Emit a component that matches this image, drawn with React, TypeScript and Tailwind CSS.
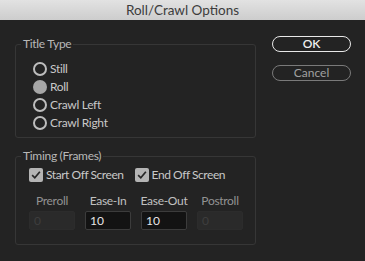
import React, { useState } from 'react';

const font = { fontFamily: 'Lato, "Open Sans", sans-serif' };

const Radio = ({ label, checked, onClick }: { label: string; checked: boolean; onClick: () => void }) => (
  <button onClick={onClick} className="flex h-[18px] items-center gap-[3px] text-[12px] tracking-[-0.3px] text-[#c8c8c8]">
    {checked ? (
      <span className="h-[14px] w-[14px] rounded-full bg-[#a6a6a6]" />
    ) : (
      <span className="h-[14px] w-[14px] rounded-full border-2 border-[#bdbdbd]" />
    )}
    <span>{label}</span>
  </button>
);

const Check = ({ label }: { label: string }) => (
  <label className="flex items-center gap-[3px] text-[12px] tracking-[-0.45px] text-[#c8c8c8]">
    <span className="flex h-[14px] w-[14px] items-center justify-center rounded-[2px] bg-[#b4b4b4]">
      <svg viewBox="0 0 14 14" className="h-[12px] w-[12px]">
        <path d="M2.5 7.2 L5.6 10.2 L11.5 3.2" fill="none" stroke="#262626" strokeWidth="2" />
      </svg>
    </span>
    <span>{label}</span>
  </label>
);

const Field = ({ label, value, enabled }: { label: string; value: string; enabled: boolean }) => (
  <div className="flex w-[46px] flex-col items-center">
    <span className={`whitespace-nowrap text-[12px] leading-[16px] tracking-[-0.3px] ${enabled ? 'text-[#c0c0c0]' : 'text-[#929292]'}`}>
      {label}
    </span>
    <div
      className={`mt-[2px] flex h-[19px] w-[46px] items-center rounded-[2px] border px-[4px] text-[12px] ${
        enabled ? 'border-[#3c3c3c] bg-[#131313] text-[#e6e6e6]' : 'border-[#2c2c2c] bg-[#2a2a2a] text-[#3e3e3e]'
      }`}
    >
      {value}
    </div>
  </div>
);

export default function App() {
  const [type, setType] = useState('Roll');

  return (
    <div className="flex h-[261px] w-[365px] flex-col bg-[#232323]" style={font}>
      <div className="flex h-[20px] items-center justify-center bg-gradient-to-b from-[#e2e2e2] to-[#cdcdcd] text-[13.5px] text-[#3c3c3c]">
        Roll/Crawl Options
      </div>
      <div className="flex flex-1">
        <div className="ml-[15px] w-[241px] pt-[16px]">
          <fieldset className="rounded-[3px] border border-[#363636] pb-[5px]">
            <legend className="ml-[5px] px-[2px] text-[12px] leading-[16px] tracking-[-0.3px] text-[#b8b8b8]">Title Type</legend>
            <div className="mt-[8px] flex flex-col items-start pl-[17px]">
              {['Still', 'Roll', 'Crawl Left', 'Crawl Right'].map((r) => (
                <Radio key={r} label={r} checked={type === r} onClick={() => setType(r)} />
              ))}
            </div>
          </fieldset>
          <fieldset className="mt-[10px] rounded-[3px] border border-[#363636] pb-[14px]">
            <legend className="ml-[5px] px-[2px] text-[12px] leading-[16px] tracking-[-0.3px] text-[#b8b8b8]">Timing (Frames)</legend>
            <div className="mt-[2px] flex h-[18px] items-center gap-[11px] pl-[13px]">
              <Check label="Start Off Screen" />
              <Check label="End Off Screen" />
            </div>
            <div className="mt-[9px] flex gap-[10px] pl-[13px]">
              <Field label="Preroll" value="0" enabled={false} />
              <Field label="Ease-In" value="10" enabled />
              <Field label="Ease-Out" value="10" enabled />
              <Field label="Postroll" value="0" enabled={false} />
            </div>
          </fieldset>
        </div>
        <div className="ml-[16px] flex w-[79px] flex-col gap-[13px] pt-[16px]">
          <button className="h-[16px] rounded-full border-[1.5px] border-[#e8e8e8] text-[12px] font-semibold leading-none text-[#f0f0f0]">
            OK
          </button>
          <button className="h-[16px] rounded-full border-[1.5px] border-[#7a7a7a] text-[12px] leading-none text-[#a0a0a0]">
            Cancel
          </button>
        </div>
      </div>
    </div>
  );
}
